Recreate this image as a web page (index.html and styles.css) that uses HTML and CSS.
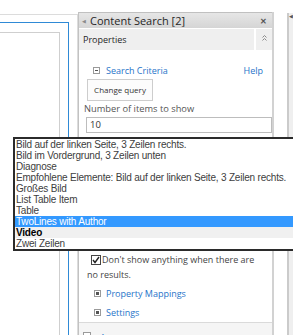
FILE: index.html
```html
<!DOCTYPE html>
<html>
<head>
	<meta charset="utf-8"/>
	<title>Content Search</title>
	<link rel="stylesheet" href="styles.css">
</head>
<body>
	<div class="screen">
		<div class="page">
			<div class="frame-outer">
				<div class="frame-blue">
					<div class="frame-gray"></div>
				</div>
			</div>
		</div>

		<div class="panel">
			<div class="panel-head">
				<span class="head-arrow">&#9664;</span>
				<span class="head-title">Content Search [2]</span>
				<span class="head-close">&#10005;</span>
			</div>
			<div class="props">
				<div class="props-title">Properties</div>
				<div class="props-toggle">
					<svg width="5" height="6" viewBox="0 0 5 6"><path d="M0.5 2.5 L2.5 0.5 L4.5 2.5 M0.5 5.5 L2.5 3.5 L4.5 5.5" fill="none" stroke="#8a8a8a" stroke-width="1"/></svg>
				</div>
			</div>

			<div class="panel-body">
				<div class="criteria">
					<span class="box-icon minus"></span>
					<span class="link">Search Criteria</span>
					<span class="link help">Help</span>
				</div>
				<div class="btn">Change query</div>
				<div class="label">Number of items to show</div>
				<div class="input">10</div>

				<div class="templates">
					<div class="label">Item Display Template</div>
					<div class="input">TwoLines with Author</div>
				</div>

				<div class="check-row">
					<span class="checkbox">
						<svg width="8" height="8" viewBox="0 0 8 8"><path d="M1 4 L3 6.5 L7 1" fill="none" stroke="#222" stroke-width="1.4"/></svg>
					</span>Don't show anything when there are no results.
				</div>

				<div class="toggle-row">
					<span class="box-icon plus"></span>
					<span class="link">Property Mappings</span>
				</div>
				<div class="toggle-row">
					<span class="box-icon plus"></span>
					<span class="link">Settings</span>
				</div>
			</div>

			<div class="next-section">
				<span class="box-icon empty"></span>
				<span class="link">Appearance</span>
			</div>
		</div>

		<div class="gap"></div>
		<div class="strip">
			<span class="strip-arrow">&#9664;</span>
		</div>

		<ul class="dropdown">
			<li>Bild auf der linken Seite, 3 Zeilen rechts.</li>
			<li>Bild im Vordergrund, 3 Zeilen unten</li>
			<li>Diagnose</li>
			<li>Empfohlene Elemente: Bild auf der linken Seite, 3 Zeilen rechts.</li>
			<li>Großes Bild</li>
			<li>List Table Item</li>
			<li>Table</li>
			<li class="selected">TwoLines with Author</li>
			<li class="hover">Video</li>
			<li>Zwei Zeilen</li>
		</ul>
	</div>
</body>
</html>
```

FILE: styles.css
```css
*{margin: 0;padding: 0;box-sizing: border-box;}
ul{list-style-type: none;}
body{
	margin: 0;
	background: #fff;
}
.screen{
	position: relative;
	display: flex;
	width: 293px;
	height: 335px;
	overflow: hidden;
	background: #fff;
	font-family: "Open Sans", "Noto Sans", sans-serif;
	color: #444;
}

/* page frames on the left */
.page{
	width: 80px;
	display: flex;
	flex-direction: column;
}
.frame-outer{
	flex: 1;
	display: flex;
	flex-direction: column;
	width: 78px;
	margin-top: 14px;
	padding: 7px 8px 0 0;
	border-top: 1px solid #dcdcdc;
	border-right: 1px solid #dcdcdc;
}
.frame-blue{
	flex: 1;
	display: flex;
	flex-direction: column;
	width: 69px;
	padding: 9px 9px 0 0;
	border-top: 1px solid #2f8ad6;
	border-right: 1px solid #2f8ad6;
}
.frame-gray{
	flex: 1;
	width: 60px;
	border-top: 1px solid #cfcfcf;
	border-right: 1px solid #cfcfcf;
}

/* tool pane */
.panel{
	width: 196px;
	margin-top: 12px;
	display: flex;
	flex-direction: column;
	border-left: 1px solid #c2c2c2;
	border-right: 2px solid #d2d2d2;
}
.panel-head{
	display: flex;
	align-items: center;
	height: 18px;
	padding-left: 3px;
	background: linear-gradient(#e6e6e6, #d5d5d5);
	border-top: 1px solid #c0c0c0;
}
.head-arrow{
	font-size: 5px;
	color: #8a8a8a;
}
.head-title{
	margin-left: 4px;
	font-size: 11px;
	color: #262626;
}
.head-close{
	margin-left: auto;
	margin-right: 5px;
	font-size: 8px;
	font-weight: bold;
	color: #555;
}
.props{
	display: flex;
	gap: 2px;
	height: 21px;
	margin-top: 1px;
}
.props-title{
	flex: 1;
	padding-left: 4px;
	line-height: 21px;
	font-size: 9px;
	color: #262626;
	background: #efefef;
}
.props-toggle{
	width: 16px;
	display: flex;
	justify-content: center;
	padding-top: 6px;
	background: #efefef;
}

.panel-body{
	padding-left: 5px;
	font-size: 9px;
}
.link{
	color: #1f74c9;
}
.criteria{
	display: flex;
	align-items: center;
	height: 14px;
	margin-top: 13px;
	padding: 0 9px 0 9px;
}
.criteria .link{
	margin-left: 6px;
}
.criteria .help{
	margin-left: auto;
}
.box-icon{
	position: relative;
	display: inline-block;
	width: 7px;
	height: 7px;
	border: 1px solid #9a9a9a;
	background: #fff;
}
.box-icon.minus::after{
	content: "";
	position: absolute;
	left: 1px;
	top: 2px;
	width: 3px;
	height: 1px;
	background: #555;
}
.box-icon.plus::after{
	content: "";
	position: absolute;
	left: 1px;
	top: 1px;
	width: 3px;
	height: 3px;
	background: #555;
}
.btn{
	width: 66px;
	height: 22px;
	margin: 2px 0 0 3px;
	border: 1px solid #cdcdcd;
	background: #fcfcfc;
	font-size: 8px;
	line-height: 20px;
	text-align: center;
	color: #333;
}
.label{
	margin-top: 2px;
	font-size: 9.3px;
	line-height: 12px;
	color: #555;
}
.input{
	width: 186px;
	height: 16px;
	margin: 2px 0 0 2px;
	padding-left: 3px;
	border: 1px solid #bdbdbd;
	font-size: 9.5px;
	line-height: 14px;
	color: #333;
}
.templates{
	height: 119px;
	padding-top: 20px;
}
.check-row{
	margin-left: 3px;
	padding-right: 8px;
	line-height: 15px;
	color: #444;
}
.checkbox{
	display: inline-flex;
	align-items: center;
	justify-content: center;
	width: 10px;
	height: 10px;
	margin: 0 1px 0 4px;
	vertical-align: -1px;
	border: 1px solid #444;
	background: #fff;
}
.toggle-row{
	display: flex;
	align-items: center;
	height: 14px;
	margin-top: 4px;
	padding-left: 10px;
}
.toggle-row + .toggle-row{
	margin-top: 5px;
}
.toggle-row .link{
	margin-left: 5px;
}
.next-section{
	display: flex;
	align-items: center;
	margin-top: 3px;
	padding: 8px 0 0 4px;
	height: 30px;
	align-items: flex-start;
	border-top: 1px solid #dadada;
	background: #f5f5f5;
	font-size: 9px;
}
.next-section .box-icon{
	width: 8px;
	height: 8px;
	margin-top: 1px;
}
.next-section .link{
	margin-left: 9px;
}

/* right edge */
.gap{
	width: 14px;
}
.strip{
	flex: 1;
	margin-top: 13px;
	border-left: 2px solid #cbcbcb;
	background: #efefef;
}
.strip-arrow{
	display: block;
	font-size: 5px;
	line-height: 5px;
	margin-top: 1px;
	color: #555;
}

/* open select list over the pane */
.dropdown{
	position: absolute;
	left: 13px;
	top: 137px;
	width: 300px;
	border: 2px solid #2b2b2b;
	border-right: none;
	background: #fff;
	font-family: "Liberation Sans", Arial, sans-serif;
	font-size: 10px;
	letter-spacing: -0.2px;
	line-height: 11px;
	color: #404040;
}
.dropdown li{
	height: 11px;
	padding-left: 1px;
	white-space: nowrap;
}
.dropdown li.selected{
	background: #3399ff;
	color: #fff;
}
.dropdown li.hover{
	background: #f0f0f0;
	color: #000;
	font-weight: bold;
}
```
